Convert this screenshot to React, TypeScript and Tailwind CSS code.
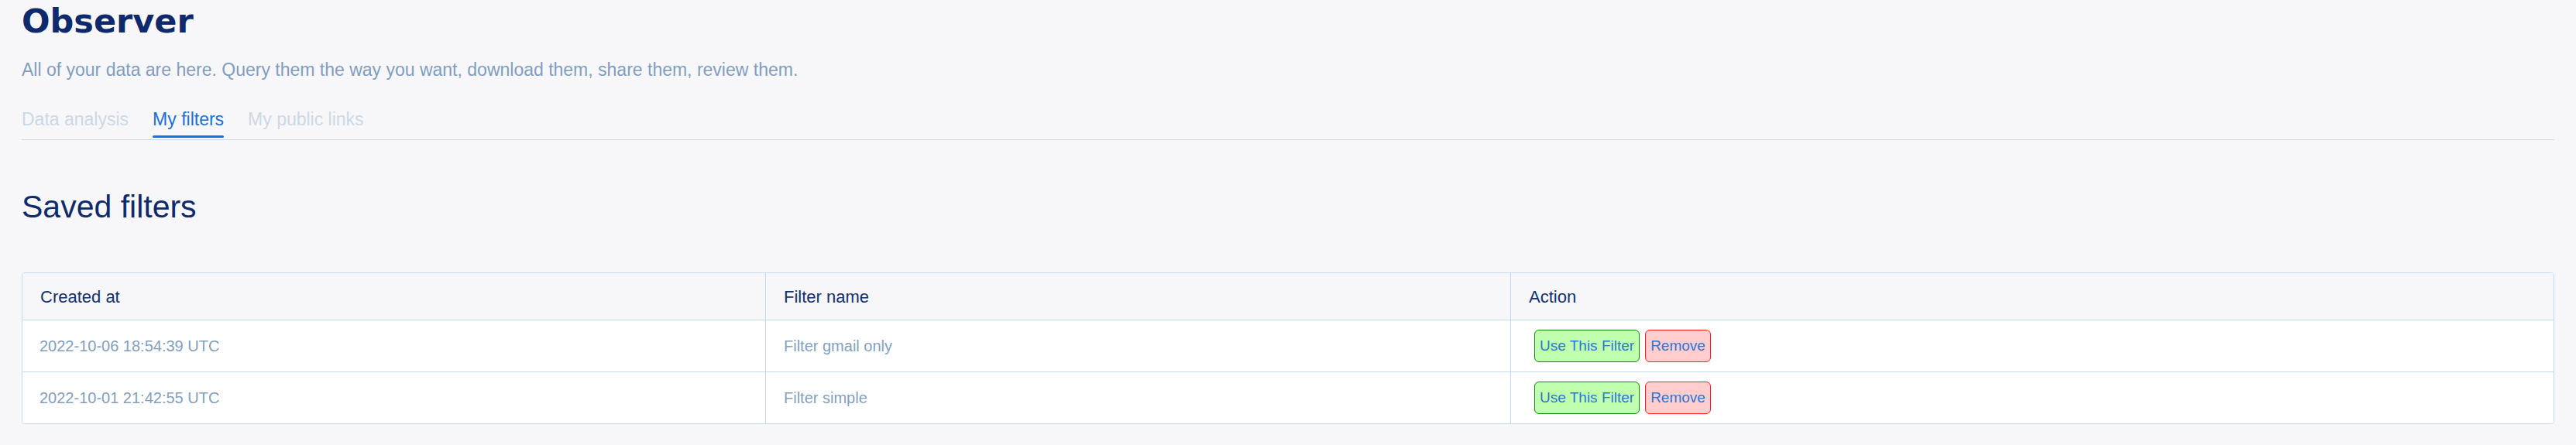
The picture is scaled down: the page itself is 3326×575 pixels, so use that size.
import { FC } from "react";

interface SavedFilter {
  createdAt: string;
  name: string;
}

const filters: SavedFilter[] = [
  { createdAt: "2022-10-06 18:54:39 UTC", name: "Filter gmail only" },
  { createdAt: "2022-10-01 21:42:55 UTC", name: "Filter simple" },
];

const tabs = ["Data analysis", "My filters", "My public links"];

const App: FC = () => {
  return (
    <div className="min-h-screen bg-[#f7f7fa] px-7 pt-[6px] pb-7 font-['Liberation_Sans',Arial,sans-serif]">
      <h1 className="font-['DejaVu_Sans',sans-serif] text-[43px] font-bold leading-[43px] text-[#0e2a6c]">
        Observer
      </h1>
      <p className="mt-[25px] text-[23px] leading-[32px] text-[#819ec0]">
        All of your data are here. Query them the way you want, download them,
        share them, review them.
      </p>

      <div className="mt-[32px] flex gap-[31px] border-b border-[#c6d9ee]">
        {tabs.map((tab) => {
          const active = tab === "My filters";
          return (
            <button
              key={tab}
              className={
                active
                  ? "flex flex-col pb-[2px] text-[23px] leading-[32px] text-[#1b6fdb]"
                  : "flex flex-col pb-[2px] text-[23px] leading-[32px] text-[#cdd8e4]"
              }
            >
              <span>{tab}</span>
              <span
                className={
                  active
                    ? "mt-[5px] h-[3px] w-full rounded-full bg-[#1a73dc]"
                    : "mt-[5px] h-[3px] w-full"
                }
              />
            </button>
          );
        })}
      </div>

      <h2 className="mt-[62px] text-[41px] leading-[48px] text-[#0e2a6c]">
        Saved filters
      </h2>

      <div className="mt-[61px] overflow-hidden rounded-[4px] border border-[#c6d9ee]">
        <div className="grid grid-cols-[959px_962px_1fr] border-b border-[#c6d9ee] bg-[#f7f7fa] text-[22px] text-[#13306e]">
          <div className="flex h-[60px] items-center px-[23px]">Created at</div>
          <div className="flex h-[60px] items-center border-l border-[#c6d9ee] px-[23px]">
            Filter name
          </div>
          <div className="flex h-[60px] items-center border-l border-[#c6d9ee] px-[23px]">
            Action
          </div>
        </div>
        {filters.map((f, i) => (
          <div
            key={f.createdAt}
            className={
              i < filters.length - 1
                ? "grid grid-cols-[959px_962px_1fr] border-b border-[#c6d9ee] bg-white text-[20px] text-[#829fc0]"
                : "grid grid-cols-[959px_962px_1fr] bg-white text-[20px] text-[#829fc0]"
            }
          >
            <div className="flex h-[66px] items-center px-[22px]">{f.createdAt}</div>
            <div className="flex h-[66px] items-center border-l border-[#c6d9ee] px-[23px]">
              {f.name}
            </div>
            <div className="flex h-[66px] items-center gap-[7px] border-l border-[#c6d9ee] pl-[30px]">
              <button className="h-[42px] rounded-[6px] border border-[#0b8a0b] bg-[#c0ffad] px-[6px] text-[19px] text-[#2a78d6]">
                Use This Filter
              </button>
              <button className="h-[42px] rounded-[6px] border border-[#ff1f1f] bg-[#ffcdcd] px-[6px] text-[19px] text-[#2a78d6]">
                Remove
              </button>
            </div>
          </div>
        ))}
      </div>
    </div>
  );
};

export default App;
